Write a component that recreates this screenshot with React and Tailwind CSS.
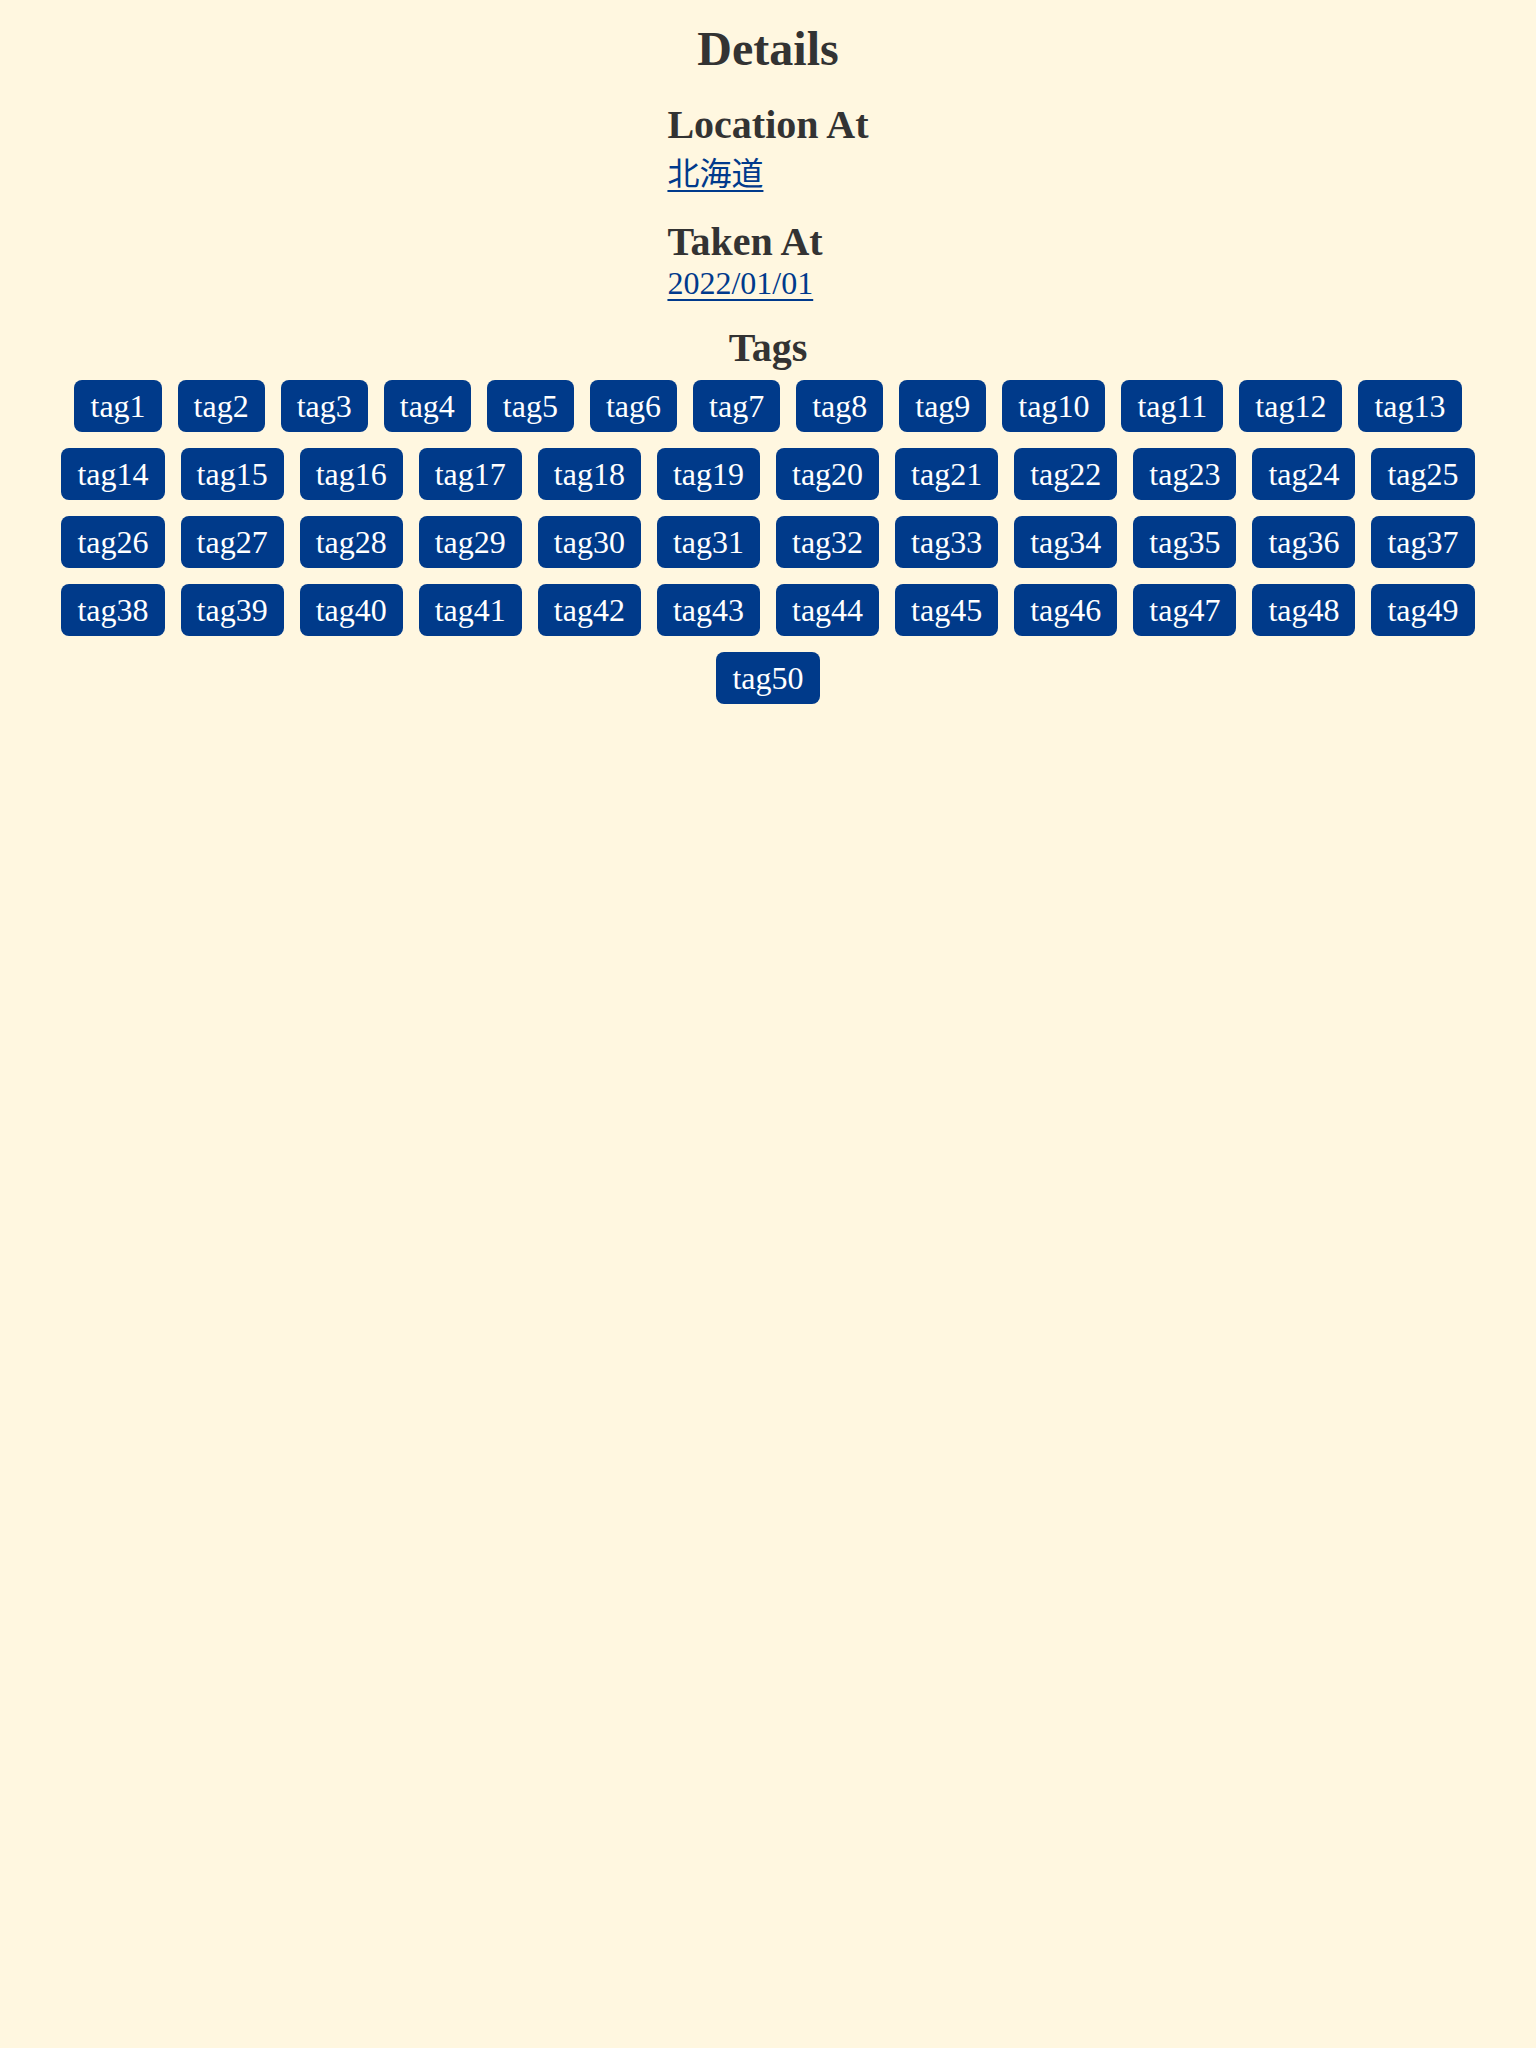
import React from "react";

const tags = Array.from({ length: 50 }, (_, i) => `tag${i + 1}`);

export default function App() {
  return (
    <div className="min-h-screen bg-[#fff7e0] text-[#333333] font-['Liberation_Serif','Noto_Sans_CJK_JP',serif]">
      <h1 className="pt-[21px] text-center text-[48px] font-bold leading-[normal]">Details</h1>
      <div className="mx-auto mt-[25px] w-fit">
        <h2 className="text-[40px] font-bold leading-[normal]">Location At</h2>
        <div className="text-[32px] leading-[normal]">
          <a href="#" className="text-[#003a8c] underline decoration-2 underline-offset-[5px]">北海道</a>
        </div>
        <h2 className="mt-[24px] text-[40px] font-bold leading-[normal]">Taken At</h2>
        <div className="text-[32px] leading-[normal]">
          <a href="#" className="text-[#003a8c] underline decoration-2 underline-offset-[5px]">2022/01/01</a>
        </div>
      </div>
      <h2 className="mt-[22px] text-center text-[40px] font-bold leading-[normal]">Tags</h2>
      <div className="mt-[9px] flex flex-wrap justify-center gap-4 px-4">
        {tags.map((t) => (
          <span
            key={t}
            className="rounded-lg bg-[#003a8a] px-4 py-2 text-[32px] leading-[36px] text-white"
          >
            {t}
          </span>
        ))}
      </div>
    </div>
  );
}
